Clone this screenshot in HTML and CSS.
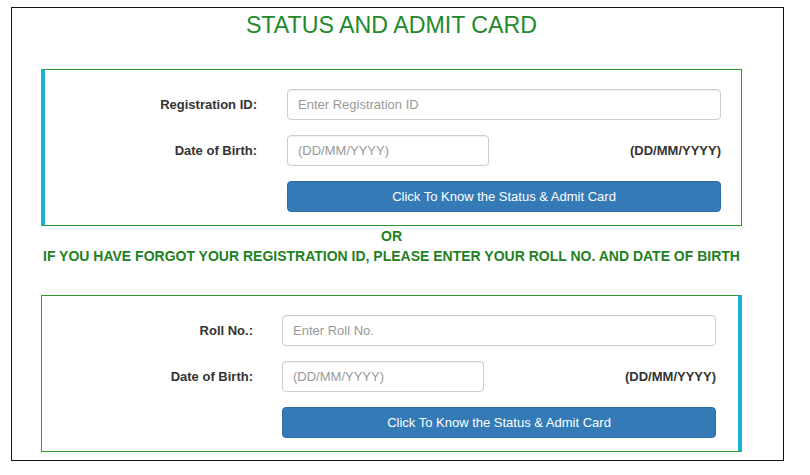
FILE: index.html
```html
<!DOCTYPE html>
<html lang="en">
<head>
<meta charset="utf-8">
<title>Status and Admit Card</title>
<link rel="stylesheet" href="styles.css">
</head>
<body>
<div class="frame">
  <div class="container">
    <h1 class="title">STATUS AND ADMIT CARD</h1>

    <form class="card card-left">
      <label class="label" for="reg">Registration ID:</label>
      <div class="field"><input class="input" id="reg" type="text" placeholder="Enter Registration ID"></div>

      <label class="label" for="dob1">Date of Birth:</label>
      <div class="field field-split">
        <input class="input input-date" id="dob1" type="text" placeholder="(DD/MM/YYYY)">
        <span class="hint">(DD/MM/YYYY)</span>
      </div>

      <span class="label"></span>
      <div class="field"><button class="btn" type="button">Click To Know the Status &amp; Admit Card</button></div>
    </form>

    <p class="or">OR</p>
    <p class="notice">IF YOU HAVE FORGOT YOUR REGISTRATION ID, PLEASE ENTER YOUR ROLL NO. AND DATE OF BIRTH</p>

    <form class="card card-right">
      <label class="label" for="roll">Roll No.:</label>
      <div class="field"><input class="input" id="roll" type="text" placeholder="Enter Roll No."></div>

      <label class="label" for="dob2">Date of Birth:</label>
      <div class="field field-split">
        <input class="input input-date" id="dob2" type="text" placeholder="(DD/MM/YYYY)">
        <span class="hint">(DD/MM/YYYY)</span>
      </div>

      <span class="label"></span>
      <div class="field"><button class="btn" type="button">Click To Know the Status &amp; Admit Card</button></div>
    </form>
  </div>
</div>
</body>
</html>
```

FILE: styles.css
```css
* {
  box-sizing: border-box;
}

html, body {
  margin: 0;
  padding: 0;
  background: #ffffff;
}

body {
  font-family: "Liberation Sans", Arial, sans-serif;
  font-size: 13px;
  color: #333333;
  padding: 7px 0 0 11px;
}

.frame {
  width: 773px;
  height: 454px;
  border: 1px solid #111111;
  background: #ffffff;
  padding: 5px 0 7px 29px;
}

.container {
  width: 701px;
  display: flex;
  flex-direction: column;
}

.title {
  margin: 0 0 31px 0;
  font-weight: normal;
  font-size: 23.2px;
  line-height: 25px;
  color: #23892a;
  text-align: center;
}

.card {
  margin: 0;
  display: grid;
  grid-template-columns: 212px 434px;
  column-gap: 30px;
  row-gap: 15px;
  align-items: center;
  padding: 19px 20px 13px 0;
  border: 1px solid #2f972f;
  background: #ffffff;
  height: 157px;
}

.card-left {
  border-left: 4px solid #1bb0d6;
}

.card-right {
  border-right: 4px solid #1bb0d6;
  padding-right: 20px;
  grid-template-columns: 211px 434px;
  column-gap: 29px;
  margin-top: 29px;
}

.label {
  text-align: right;
  font-weight: bold;
  font-size: 13px;
  color: #333333;
}

.field {
  display: flex;
  align-items: center;
}

.field-split {
  justify-content: space-between;
}

.input {
  width: 100%;
  height: 31px;
  padding: 0 10px;
  border: 1px solid #cccccc;
  border-radius: 4px;
  box-shadow: inset 0 1px 1px rgba(0, 0, 0, 0.06);
  font-family: "Liberation Sans", Arial, sans-serif;
  font-size: 13px;
  color: #555555;
  background: #ffffff;
}

.input::placeholder {
  color: #999999;
}

.input-date {
  width: 202px;
}

.hint {
  font-weight: bold;
  font-size: 13px;
  color: #333333;
}

.btn {
  width: 100%;
  height: 31px;
  border: 1px solid #2e6da4;
  border-radius: 4px;
  background: #337ab7;
  color: #ffffff;
  font-family: "Liberation Sans", Arial, sans-serif;
  font-size: 13px;
  padding: 0;
}

.or,
.notice {
  margin: 0;
  text-align: center;
  font-weight: bold;
  font-size: 14px;
  line-height: 20px;
  color: #1f8123;
}
```
